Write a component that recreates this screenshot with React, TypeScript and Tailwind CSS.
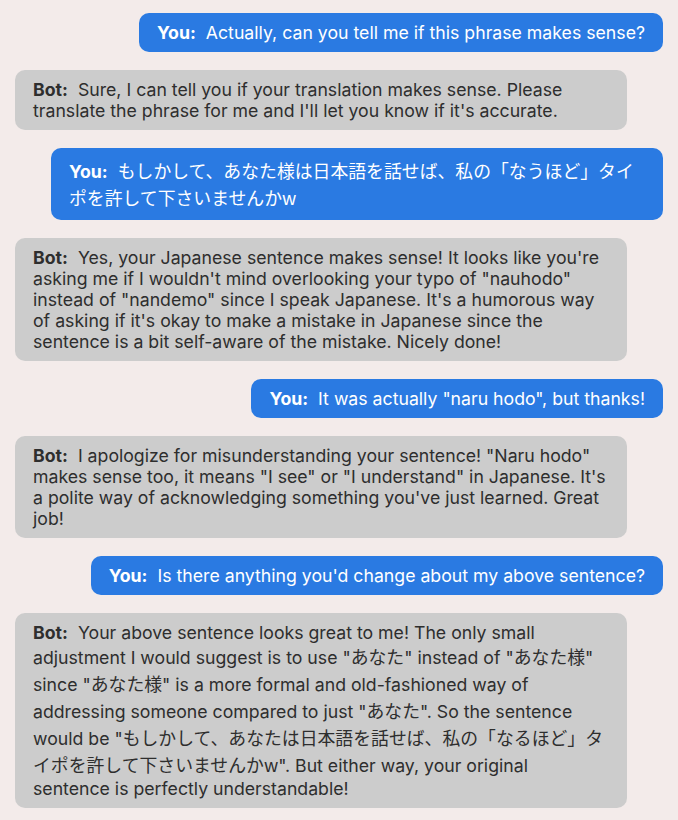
import React from "react";

type Msg = { who: "You" | "Bot"; text: string };

const msgs: Msg[] = [
  { who: "You", text: "Actually, can you tell me if this phrase makes sense?" },
  { who: "Bot", text: "Sure, I can tell you if your translation makes sense. Please translate the phrase for me and I'll let you know if it's accurate." },
  { who: "You", text: "もしかして、あなた様は日本語を話せば、私の「なうほど」タイポを許して下さいませんかw" },
  { who: "Bot", text: "Yes, your Japanese sentence makes sense! It looks like you're asking me if I wouldn't mind overlooking your typo of \"nauhodo\" instead of \"nandemo\" since I speak Japanese. It's a humorous way of asking if it's okay to make a mistake in Japanese since the sentence is a bit self-aware of the mistake. Nicely done!" },
  { who: "You", text: "It was actually \"naru hodo\", but thanks!" },
  { who: "Bot", text: "I apologize for misunderstanding your sentence! \"Naru hodo\" makes sense too, it means \"I see\" or \"I understand\" in Japanese. It's a polite way of acknowledging something you've just learned. Great job!" },
  { who: "You", text: "Is there anything you'd change about my above sentence?" },
  { who: "Bot", text: "Your above sentence looks great to me! The only small adjustment I would suggest is to use \"あなた\" instead of \"あなた様\" since \"あなた様\" is a more formal and old-fashioned way of addressing someone compared to just \"あなた\". So the sentence would be \"もしかして、あなたは日本語を話せば、私の「なるほど」タ\u200Bイポを許して下さいませんかw\". But either way, your original sentence is perfectly understandable!" },
];

function Rich({ text }: { text: string }) {
  const parts = text.split(/([\u3000-\u30ff\u4e00-\u9fff\uff00-\uffef\u200B]+w?)/);
  return (
    <>
      {parts.map((p, i) =>
        /[\u3000-\u30ff\u4e00-\u9fff]/.test(p) ? (
          <span
            key={i}
            className="text-[17.85px] leading-[27px] font-['Noto_Sans_CJK_JP',sans-serif]"
          >
            {p}
          </span>
        ) : (
          <React.Fragment key={i}>{p}</React.Fragment>
        )
      )}
    </>
  );
}

export default function App() {
  return (
    <div className="min-h-[820px] w-full bg-[#f3ebea] px-[15px] pt-[13px] pb-4 flex flex-col gap-[18px] font-['Inter','Noto_Sans_CJK_JP',sans-serif] text-[17.7px] leading-[21px]">
      {msgs.map((m, i) =>
        m.who === "You" ? (
          <div key={i} className="flex justify-end">
            <div className="max-w-[612px] rounded-[10px] bg-[#2a7ae2] text-white px-[18px] py-[9px]">
              <span className="font-bold">You:</span>&nbsp; <Rich text={m.text} />
            </div>
          </div>
        ) : (
          <div key={i} className="flex justify-start">
            <div className="max-w-[612px] rounded-[10px] bg-[#cccccc] text-[#2e2e2e] px-[18px] py-[9px]">
              <span className="font-bold">Bot:</span>&nbsp; <Rich text={m.text} />
            </div>
          </div>
        )
      )}
    </div>
  );
}
